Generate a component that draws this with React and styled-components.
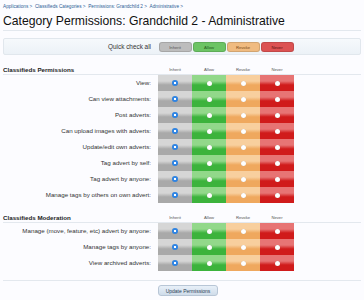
import React from "react";
import styled, { createGlobalStyle } from "styled-components";

const Global = createGlobalStyle`
  html, body { margin: 0; padding: 0; background: #fcfcff; }
  body { font-family: "Liberation Sans", Arial, sans-serif; color: #222; }
`;

const Page = styled.div`
  width: 364px;
  height: 300px;
  padding: 0 3px;
  box-sizing: border-box;
  overflow: hidden;
`;

const Crumbs = styled.div`
  padding-top: 2px;
  height: 10px;
  line-height: 10px;
  font-size: 4.7px;
  color: #2b5c96;
  white-space: nowrap;
`;

const Title = styled.h1`
  margin: 0;
  height: 18px;
  line-height: 18px;
  font-size: 12.2px;
  font-weight: normal;
  color: #111;
  border-bottom: 1px solid #e3e8ee;
  white-space: nowrap;
`;

const QuickBar = styled.div`
  margin-top: 7px;
  height: 17px;
  box-sizing: border-box;
  border: 1px solid #e1e7ed;
  border-radius: 2px;
  background: linear-gradient(#f6f9fc, #ecf2f7);
  display: grid;
  grid-template-columns: 154px repeat(4, 34px);
  align-items: center;
`;

const QuickLabel = styled.div`
  text-align: right;
  padding-right: 7px;
  font-size: 6.4px;
  color: #333;
`;

const pal = {
  inherit: { l: "#d6d6d6", d: "#a9a9a9", b: "#bdbdbd", t: "#555" },
  allow: { l: "#92d88a", d: "#3cb33c", b: "#6cc464", t: "#245a20" },
  revoke: { l: "#f8cf9e", d: "#efa85e", b: "#f0bb80", t: "#7a4a18" },
  never: { l: "#e77474", d: "#d01b1b", b: "#dc5252", t: "#5a1010" },
};

const QuickBtn = styled.div`
  height: 10px;
  margin: 0 0.5px;
  border-radius: 3px;
  background: ${(p) => pal[p.$k].b};
  border: 0.5px solid rgba(0, 0, 0, 0.12);
  box-sizing: border-box;
  font-size: 4.2px;
  line-height: 9.5px;
  text-align: center;
  color: ${(p) => pal[p.$k].t};
`;

const SectionHead = styled.div`
  display: grid;
  grid-template-columns: 155px repeat(4, 34px);
  align-items: end;
  padding-top: 10px;
  height: 9px;
  line-height: 9px;
  border-bottom: 1px solid #e3e8ee;
`;

const SectionTitle = styled.div`
  font-size: 6.2px;
  font-weight: bold;
  color: #222;
  white-space: nowrap;
`;

const ColHead = styled.div`
  font-size: 4.2px;
  color: #555;
  text-align: center;
`;

const Row = styled.div`
  display: grid;
  grid-template-columns: 155px repeat(4, 34px);
  height: 16px;
`;

const Label = styled.div`
  text-align: right;
  padding-right: 7px;
  font-size: 6.2px;
  line-height: 16px;
  color: #333;
  white-space: nowrap;
`;

const Cell = styled.div`
  display: flex;
  align-items: center;
  justify-content: center;
  background: linear-gradient(
    ${(p) => pal[p.$k].l} 0%,
    ${(p) => pal[p.$k].l} 38%,
    ${(p) => pal[p.$k].d} 62%,
    ${(p) => pal[p.$k].d} 100%
  );
`;

const Dot = styled.span`
  width: ${(p) => (p.$on ? 6 : 5)}px;
  height: ${(p) => (p.$on ? 6 : 5)}px;
  border-radius: 50%;
  background: ${(p) =>
    p.$on
      ? "radial-gradient(circle at 50% 50%, #ffffff 0, #ffffff 0.8px, #2f86e6 1.4px, #2a7fe0 100%)"
      : "#ffffff"};
  box-shadow: 0 0 0.5px rgba(0, 0, 0, 0.3);
`;

const Footer = styled.div`
  margin-top: 9px;
  border-top: 1px solid #e3e8ee;
  padding: 4px 0 0 155px;
  display: flex;
`;

const Button = styled.button`
  display: block;
  width: 60px;
  height: 11px;
  padding: 0;
  border: 0.5px solid #b8c6d6;
  border-radius: 3px;
  background: linear-gradient(#e8f0f8, #cfdcea);
  font-family: "Liberation Sans", Arial, sans-serif;
  font-size: 5px;
  line-height: 10px;
  color: #2a3c55;
`;

const keys = ["inherit", "allow", "revoke", "never"];
const names = ["Inherit", "Allow", "Revoke", "Never"];

const sections = [
  {
    title: "Classifieds Permissions",
    rows: [
      "View:",
      "Can view attachments:",
      "Post adverts:",
      "Can upload images with adverts:",
      "Update/edit own adverts:",
      "Tag advert by self:",
      "Tag advert by anyone:",
      "Manage tags by others on own advert:",
    ],
  },
  {
    title: "Classifieds Moderation",
    rows: [
      "Manage (move, feature, etc) advert by anyone:",
      "Manage tags by anyone:",
      "View archived adverts:",
    ],
  },
];

export default function App() {
  return (
    <Page>
      <Global />
      <Crumbs>
        Applications &gt; &nbsp;Classifieds Categories &gt; &nbsp;Permissions: Grandchild 2 &gt; &nbsp;Administrative &gt;
      </Crumbs>
      <Title>Category Permissions: Grandchild 2 - Administrative</Title>
      <QuickBar>
        <QuickLabel>Quick check all</QuickLabel>
        {keys.map((k, i) => (
          <QuickBtn key={k} $k={k}>
            {names[i]}
          </QuickBtn>
        ))}
      </QuickBar>
      {sections.map((s) => (
        <div key={s.title}>
          <SectionHead>
            <SectionTitle>{s.title}</SectionTitle>
            {names.map((n) => (
              <ColHead key={n}>{n}</ColHead>
            ))}
          </SectionHead>
          {s.rows.map((r) => (
            <Row key={r}>
              <Label>{r}</Label>
              {keys.map((k) => (
                <Cell key={k} $k={k}>
                  <Dot $on={k === "inherit"} />
                </Cell>
              ))}
            </Row>
          ))}
        </div>
      ))}
      <Footer>
        <Button>Update Permissions</Button>
      </Footer>
    </Page>
  );
}
